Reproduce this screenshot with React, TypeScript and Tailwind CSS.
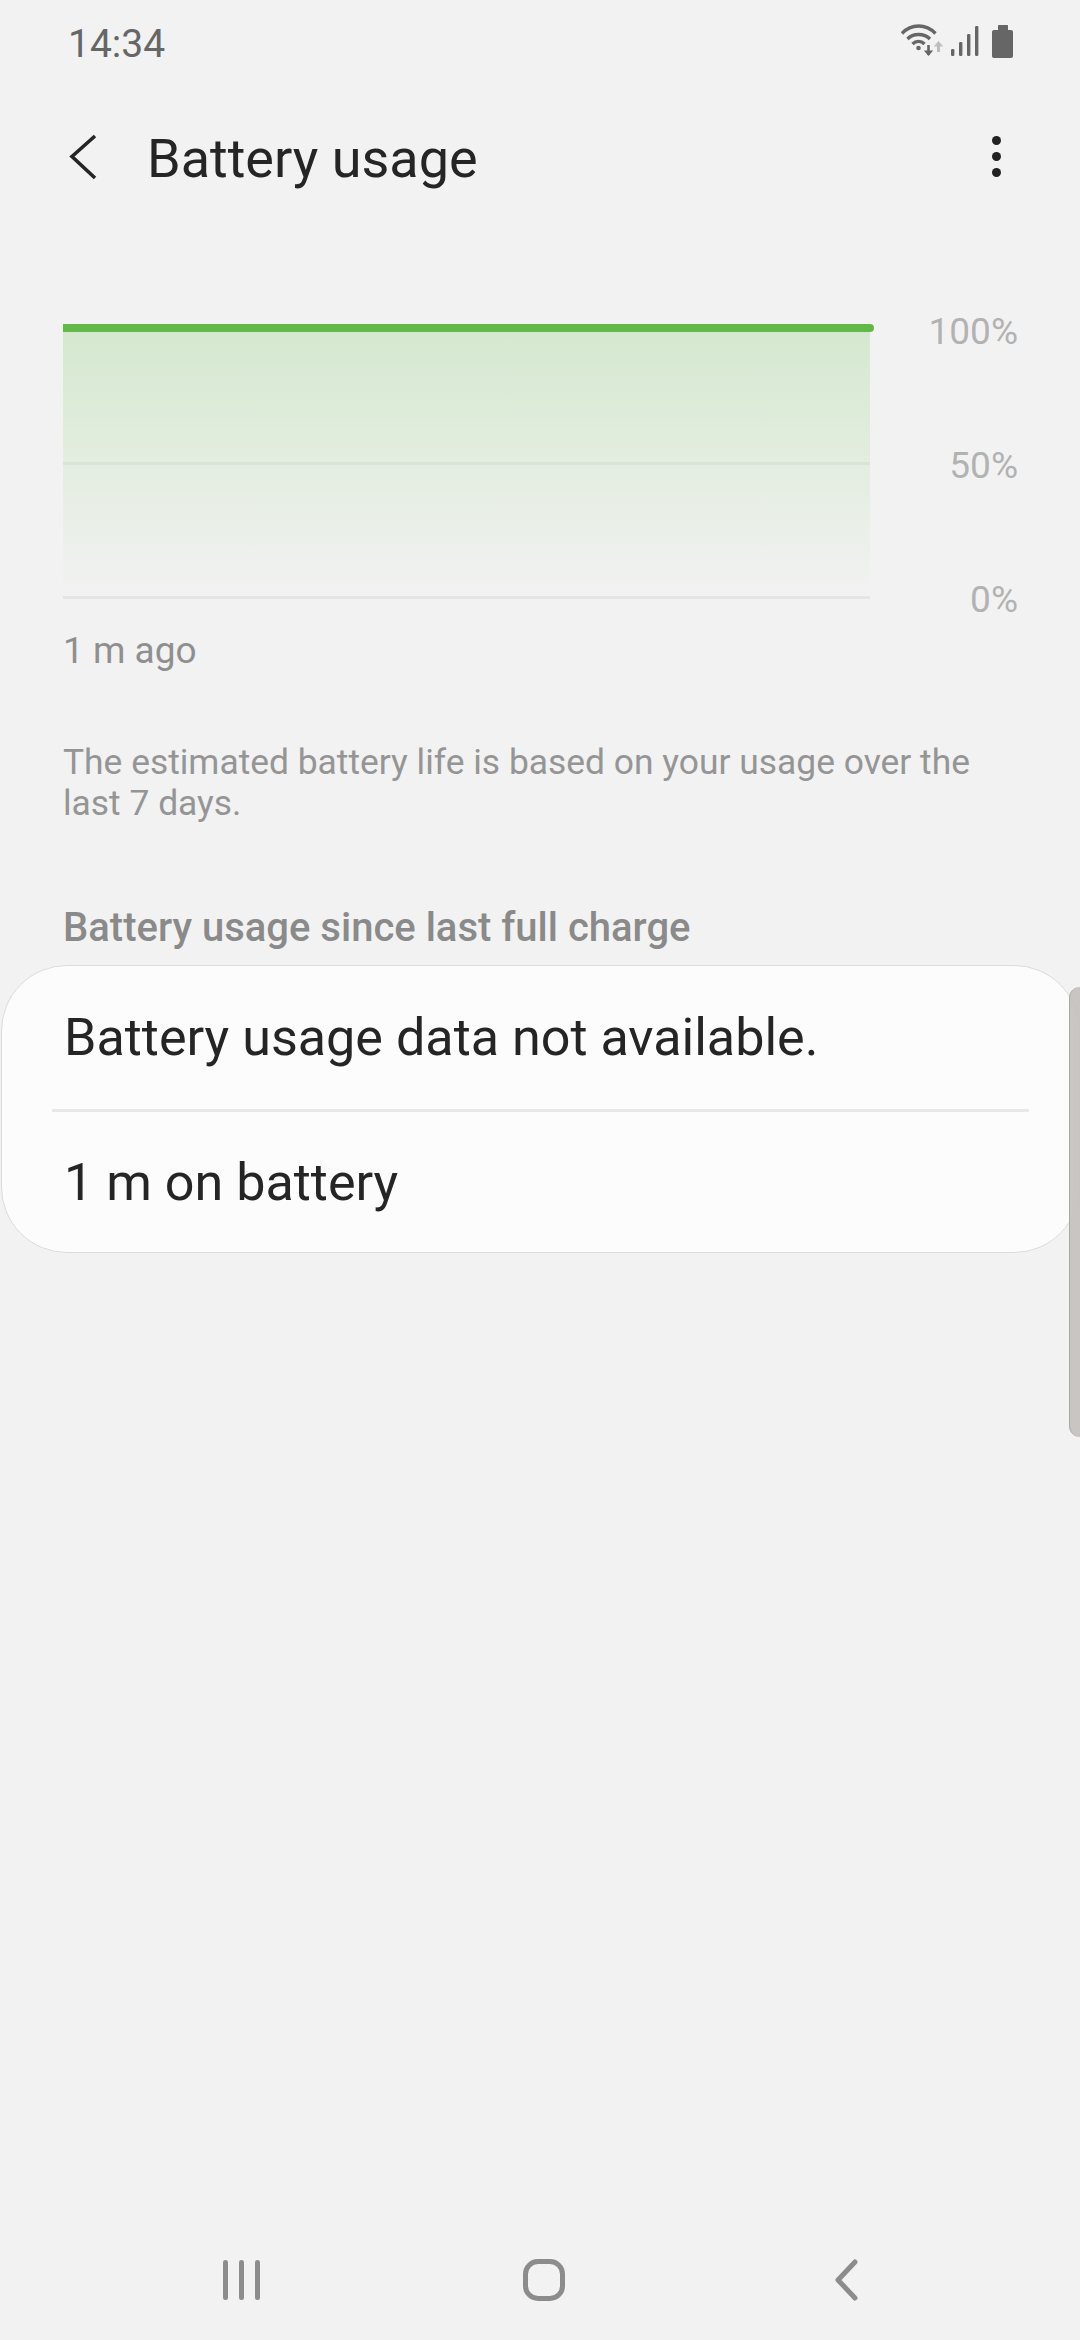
import React from "react";

function StatusIcons() {
  return (
    <svg width="120" height="40" viewBox="0 0 120 40" fill="none" className="block">
      <g transform="translate(0,-2)">
        {/* wifi */}
        <g stroke="#666666" strokeWidth="3.4" fill="none">
          <path d="M1 13.5 C10 3.5 25 3.5 34.5 13.5" />
          <path d="M6.5 19 C12 13 23 13 29 19" />
          <path d="M11.5 24 C15 20.5 20 20.5 23.5 24" />
        </g>
        <circle cx="17.5" cy="28" r="2.3" fill="#666666" />
        {/* down / up arrows */}
        <path d="M27.5 25 V35" stroke="#666666" strokeWidth="2.6" />
        <path d="M22.8 30.5 L27.5 36 L32.2 30.5 Z" fill="#666666" />
        <path d="M37.5 25 V32" stroke="#bdbdbd" strokeWidth="3" />
        <path d="M32.8 26.5 L37.5 21 L42.2 26.5 Z" fill="#bdbdbd" />
        {/* signal */}
        <g fill="#666666">
          <rect x="50" y="29" width="3.4" height="7" rx="1.2" />
          <rect x="58" y="22" width="3.4" height="14" rx="1.2" />
          <rect x="66" y="14" width="3.4" height="22" rx="1.2" />
          <rect x="74" y="6" width="3.4" height="30" rx="1.2" />
        </g>
        {/* battery */}
        <path
          d="M97 5.5 C97 5.2 97.3 5 97.6 5 H106.4 C106.7 5 107 5.2 107 5.5 V10 H110 C111.2 10 112 10.8 112 12 V36 C112 37.2 111.2 38 110 38 H93 C91.8 38 91 37.2 91 36 V12 C91 10.8 91.8 10 93 10 H97 Z"
          fill="#666666"
        />
      </g>
    </svg>
  );
}

function ChartLabel({ children }: { children: React.ReactNode }) {
  return <span className="text-[37px] leading-[44px] text-[#b2b2b2]">{children}</span>;
}

export default function App() {
  return (
    <div
      className="relative flex flex-col w-[1080px] h-[2340px] overflow-hidden bg-[#f2f2f2]"
      style={{ fontFamily: "Roboto, sans-serif" }}
    >
      {/* Status bar */}
      <div className="flex items-center justify-between h-[84px] pl-[68px] pr-[59px]">
        <span className="pt-[5px] text-[39px] leading-none text-[#666666]">14:34</span>
        <StatusIcons />
      </div>

      {/* Toolbar */}
      <div className="flex items-center h-[146px] pl-[68px] pr-[80px]">
        <svg width="30" height="46" viewBox="0 0 30 46" fill="none" className="block">
          <path d="M27 2 L4 22.5 L27 44" stroke="#252525" strokeWidth="3.6" />
        </svg>
        <h1 className="ml-[49px] flex-1 pt-[4px] text-[54px] leading-none font-normal text-[#252525]">Battery usage</h1>
        <div className="flex flex-col gap-[6.5px] -mr-[1px] -mt-[1px]">
          <div className="w-[9.5px] h-[9.5px] rounded-full bg-[#222222]" />
          <div className="w-[9.5px] h-[9.5px] rounded-full bg-[#222222]" />
          <div className="w-[9.5px] h-[9.5px] rounded-full bg-[#222222]" />
        </div>
      </div>

      {/* Chart */}
      <div className="flex mt-[94px] pl-[63px] pr-[62px]">
        <div className="w-[811px] flex flex-col">
          <div className="h-[8px] rounded-r-full bg-[#62b947]" />
          <div className="w-[807px] h-[267px] flex flex-col bg-gradient-to-b from-[#d5e8cf] to-[#f2f2f2]">
            <div className="h-[133px] border-b-[3px] border-[#dbe3d6]" />
            <div className="flex-1 border-b-[3px] border-[#e5e5e5]" />
          </div>
        </div>
        <div className="flex-1 h-[312px] -mt-[14px] -mb-[23px] flex flex-col justify-between items-end">
          <ChartLabel>100%</ChartLabel>
          <ChartLabel>50%</ChartLabel>
          <ChartLabel>0%</ChartLabel>
        </div>
      </div>

      <p className="mt-[30px] pl-[63px] text-[37px] leading-[44px] text-[#8f8f8f]">1 m ago</p>

      <p className="mt-[69px] pl-[63px] pr-[90px] text-[35.4px] leading-[41px] text-[#959595]">
        The estimated battery life is based on your usage over the last 7 days.
      </p>

      <h2 className="mt-[82px] pl-[63px] text-[40px] leading-[44px] font-medium text-[#8a8a8a]">
        Battery usage since last full charge
      </h2>

      {/* Card */}
      <div className="mt-[15px] ml-[1px] w-[1079px] h-[288px] flex flex-col rounded-[66px] border border-[#dcdcdc] bg-[#fcfcfc]">
        <div className="flex items-center h-[143px] pl-[62px] pt-[2px] text-[52.1px] text-[#252525]">
          Battery usage data not available.
        </div>
        <div className="ml-[50px] mr-[50px] h-[3px] bg-[#e8e8e8]" />
        <div className="flex items-center flex-1 pl-[62px] pt-[2px] text-[52.1px] text-[#252525]">1 m on battery</div>
      </div>

      {/* Scroll handle */}
      <div className="absolute top-[987px] right-0 w-[11px] h-[450px] rounded-l-[11px] border-l border-[#aaa8a6] bg-[#c4c0bd]/90" />

      {/* Navigation bar */}
      <div className="mt-auto flex items-center h-[120px] pl-[223px]">
        <div className="flex gap-[11px]">
          <div className="w-[5px] h-[40px] rounded-full bg-[#8c8c8c]" />
          <div className="w-[5px] h-[40px] rounded-full bg-[#8c8c8c]" />
          <div className="w-[5px] h-[40px] rounded-full bg-[#8c8c8c]" />
        </div>
        <div className="ml-[263px] w-[42px] h-[42px] rounded-[15px] border-[5px] border-[#8c8c8c]" />
        <svg width="28" height="44" viewBox="0 0 28 44" fill="none" className="ml-[268px] block">
          <path d="M22 4 L5 22 L22 40" stroke="#8c8c8c" strokeWidth="5" strokeLinecap="round" strokeLinejoin="round" />
        </svg>
      </div>
    </div>
  );
}
